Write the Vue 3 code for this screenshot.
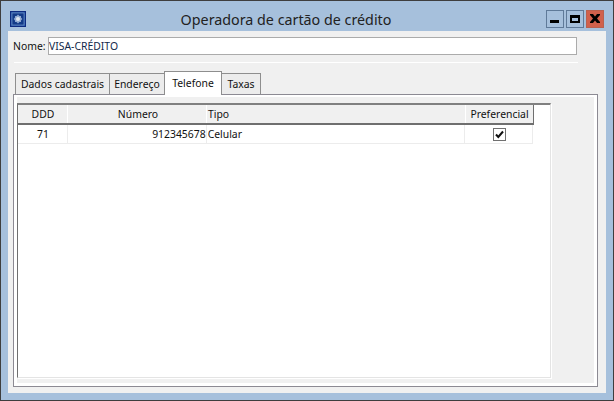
<template>
  <div class="window">
    <header class="titlebar">
      <svg class="app-icon" width="16" height="16" viewBox="0 0 16 16">
        <rect x="0.5" y="0.5" width="15" height="15" fill="#2a5aa8" stroke="#0d2a80" />
        <rect x="2" y="2" width="12" height="12" fill="#123a88" stroke="#7f9fd0" stroke-width="0.6" />
        <path d="M8 3.500 9.500 5 11 5 11 6.500 12.300 8 11 9.500 11 11 9.500 11 8 12.500 6.500 11 5 11 5 9.500 3.700 8 5 6.500 5 5 6.500 5Z" fill="#8fa8d0" />
        <circle cx="8" cy="8" r="2" fill="#dfe6ef" />
      </svg>
      <h1 class="title">Operadora de cartão de crédito</h1>
      <div class="controls">
        <button class="ctl"><svg width="16" height="16" viewBox="0 0 16 16"><rect x="3" y="9" width="9" height="3" fill="#000" /></svg></button>
        <button class="ctl"><svg width="16" height="16" viewBox="0 0 16 16"><path fill="#000" fill-rule="evenodd" d="M3 4h10v8H3zM5 7v3h6V7z" /></svg></button>
        <button class="ctl close"><svg width="16" height="16" viewBox="0 0 16 16"><path fill="#000" d="M3 3h3l2 2.500L10 3h3v1l-3 3.500L13 11v1h-3L8 9.500 6 12H3v-1l3-3.500L3 4z" /></svg></button>
      </div>
    </header>
    <main class="client">
      <div class="name-row">
        <label class="name-label">Nome:</label>
        <input class="name-input" value="VISA-CRÉDITO" />
      </div>
      <div class="separator"></div>
      <nav class="tabs">
        <span v-for="t in tabs" :key="t" class="tab" :class="{ active: t === 'Telefone' }">{{ t }}</span>
      </nav>
      <section class="panel">
        <div class="grid">
          <div class="grid-head">
            <span class="cell ddd center">DDD</span>
            <span class="cell num center">Número</span>
            <span class="cell tipo">Tipo</span>
            <span class="cell pref center">Preferencial</span>
          </div>
          <div class="grid-row">
            <span class="cell ddd center">71</span>
            <span class="cell num right">912345678</span>
            <span class="cell tipo">Celular</span>
            <span class="cell pref center">
              <svg width="13" height="13" viewBox="0 0 13 13">
                <rect x="0.500" y="0.500" width="12" height="12" fill="#fff" stroke="#707070" />
                <path d="M3 6.500 5.300 9 10 3.500" fill="none" stroke="#111" stroke-width="2" />
              </svg>
            </span>
          </div>
        </div>
      </section>
    </main>
  </div>
</template>

<script setup>
const tabs = ['Dados cadastrais', 'Endereço', 'Telefone', 'Taxas']
</script>

<style>
html, body { margin: 0; padding: 0; }
</style>

<style scoped>
* { box-sizing: border-box; }
.window {
  width: 614px;
  height: 401px;
  background: #a6c0dc;
  border: 1px solid #3e3e3e;
  padding: 0 7px 7px;
  display: flex;
  flex-direction: column;
  font: 10.4px "Noto Sans", sans-serif;
  color: #1a1a1a;
  overflow: hidden;
}
.titlebar {
  height: 30px;
  flex: none;
  display: flex;
  align-items: flex-start;
}
.app-icon { margin: 10px 0 0 2px; flex: none; }
.title {
  flex: 1;
  margin: 0;
  padding-top: 9px;
  text-align: center;
  font: 400 14.3px "Noto Sans", sans-serif;
  color: #222;
}
.controls { display: flex; gap: 2px; margin-right: 2px; padding-top: 9px; }
.ctl {
  width: 18px;
  height: 18px;
  padding: 0;
  border: 1px solid #5f7a99;
  background: #a6c0dc;
  display: flex;
  align-items: center;
  justify-content: center;
}
.close { background: #d1604c; border-color: #b9604f; }
.client {
  flex: 1;
  background: #f0f0f0;
  padding: 6px 8px 6px 5px;
  display: flex;
  flex-direction: column;
}
.name-row { display: flex; align-items: center; height: 18px; flex: none; }
.name-label { width: 35px; flex: none; color: #111; }
.name-input {
  width: 529px;
  height: 18px;
  border: 1px solid #ababab;
  background: #fff;
  padding: 0;
  font: 10.4px "Noto Sans", sans-serif;
  color: #10284a;
  outline: none;
}
.separator { height: 1px; margin: 7px 20px 0 1px; background: #fff; flex: none; }
.tabs {
  display: flex;
  align-items: flex-end;
  height: 32px;
  padding-left: 2px;
  flex: none;
  margin-bottom: -1px;
  position: relative;
  z-index: 1;
}
.tab {
  height: 21px;
  margin-bottom: 1px;
  border: 1px solid #8e8e8e;
  border-bottom: 0;
  background: #ececec;
  display: flex;
  align-items: center;
  justify-content: center;
  white-space: nowrap;
  color: #111;
}
.tab:nth-child(1) { width: 95px; }
.tab:nth-child(2) { width: 56px; margin-left: -1px; }
.tab:nth-child(3) { width: 58px; margin-left: -1px; }
.tab:nth-child(4) { width: 40px; margin-left: -1px; }
.tab.active {
  height: 24px;
  margin-bottom: 0;
  padding-bottom: 2px;
  background: #fff;
  position: relative;
  z-index: 1;
}
.panel {
  flex: 1;
  border: 1px solid #8c8a93;
  padding: 8px 46px 8px 3px;
  display: flex;
  background: #f0f0f0;
  position: relative;
}
.panel::before {
  content: "";
  position: absolute;
  inset: 0;
  border: solid #fff;
  border-width: 2px 3px 3px 3px;
  pointer-events: none;
}
.grid {
  flex: 1;
  background: #fff;
  border-top: 2px solid #808080;
  border-left: 1px solid #6f6f6f;
  border-right: 1px solid #e4e4e4;
  border-bottom: 1px solid #e4e4e4;
  box-shadow: 1px 1px 0 #fff;
}
.grid-head {
  display: flex;
  width: 516px;
  height: 20px;
  background: #f0f0f0;
  border-bottom: 2px solid #6f6f6f;
  border-right: 1px solid #6f6f6f;
}
.grid-row { display: flex; width: 515px; height: 19px; border-bottom: 1px solid #ececec; border-right: 1px solid #ececec; }
.cell { display: flex; align-items: center; border-right: 1px solid #fff; color: #111; height: 100%; }
.grid-row .cell { border-right-color: #ececec; }
.center { justify-content: center; }
.right { justify-content: flex-end; }
.ddd { width: 50px; padding-left: 1px; }
.num { width: 139px; }
.num.center { padding-left: 2px; }
.tipo { width: 259px; padding-left: 1px; }
.pref { width: 67px; border-right: 0; }
.grid-row .pref { padding-left: 1px; }
</style>
